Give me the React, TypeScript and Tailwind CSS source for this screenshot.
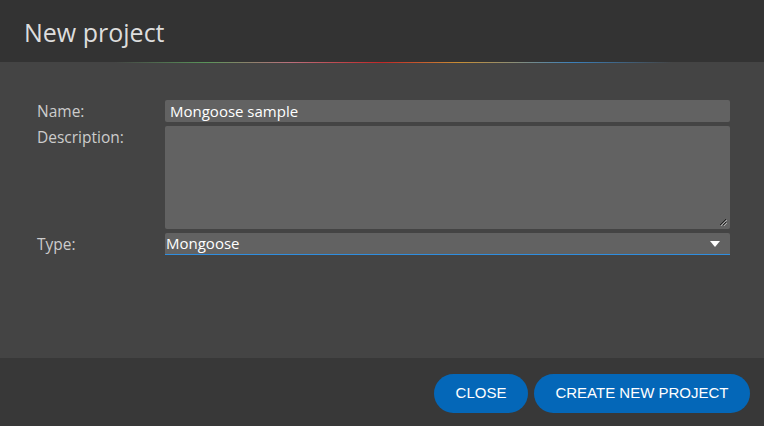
export default function App() {
  return (
    <div className="w-[764px] h-[426px] flex flex-col bg-[#444444] font-['Open_Sans',sans-serif] overflow-hidden">
      {/* header */}
      <div className="h-[62px] bg-[#333333] flex items-center px-[24px] shrink-0">
        <h1 className="text-[25px] text-[#dddddd] leading-none pt-[2px]">New project</h1>
      </div>
      <div className="h-px shrink-0 bg-[linear-gradient(to_right,transparent_15%,#5fa85f_27%,#d87a8a_38%,#e02020_50%,#e8a030_60%,#a0a080_67%,#3a8fd8_75%,transparent_88%)] opacity-80" />

      {/* body */}
      <div className="flex-1 pl-[37px] pr-[34px] pt-[37px]">
        <div className="grid grid-cols-[128px_1fr] gap-y-[4px] text-[15.5px] text-[#cccccc]">
          <label className="h-[22px] leading-[22px]">Name:</label>
          <div className="h-[22px] rounded-[2px] bg-[#626262] px-[5px] text-[15px] leading-[22px] text-white">
            Mongoose sample
          </div>

          <label className="leading-[22px]">Description:</label>
          <div className="relative h-[103px] rounded-[2px] bg-[#626262]">
            <svg className="absolute right-[3px] bottom-[3px]" width="8" height="8" viewBox="0 0 8 8">
              <path d="M1 7 L7 1 M4 7 L7 4" stroke="#222" strokeWidth="1" />
              <path d="M2 8 L8 2 M5 8 L8 5" stroke="#aaa" strokeWidth="1" />
            </svg>
          </div>

          <label className="h-[22px] leading-[22px]">Type:</label>
          <div className="relative h-[22px] rounded-t-[2px] bg-[#626262] border-b border-[#2f8ee0] pl-[1px] text-[15px] leading-[21px] text-white">
            Mongoose
            <svg className="absolute right-[10px] top-[8px]" width="10" height="6" viewBox="0 0 10 6">
              <path d="M0 0 L10 0 L5 6 Z" fill="#ffffff" />
            </svg>
          </div>
        </div>
      </div>

      {/* footer */}
      <div className="h-[68px] bg-[#383838] shrink-0 flex items-center justify-end gap-[6px] pr-[14px] pt-[2px] font-['Liberation_Sans',sans-serif] text-[15px] text-white">
        <button className="h-[39px] w-[94px] rounded-full bg-[#0467b8]">CLOSE</button>
        <button className="h-[39px] w-[216px] rounded-full bg-[#0467b8]">CREATE NEW PROJECT</button>
      </div>
    </div>
  );
}
